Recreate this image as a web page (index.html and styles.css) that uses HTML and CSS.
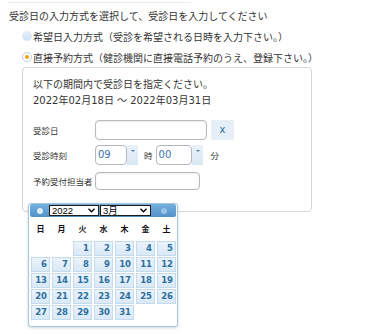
FILE: index.html
```html
<!DOCTYPE html>
<html lang="ja">
<head>
    <meta charset="UTF-8">
    <meta name="viewport" content="width=device-width, initial-scale=1.0">
    <title>受診日入力</title>
    <link rel="stylesheet" href="styles.css">
</head>
<body>
    <div class="page">
        <div class="topline"></div>
        <p class="title">受診日の入力方式を選択して、受診日を入力してください</p>

        <!-- Input method -->
        <div class="choices">
            <label class="choice"><span class="radio"></span>希望日入力方式（受診を希望される日時を入力下さい。）</label>
            <label class="choice"><span class="radio checked"></span>直接予約方式（健診機関に直接電話予約のうえ、登録下さい。）</label>
        </div>

        <!-- Direct booking panel -->
        <div class="panel">
            <p class="notice">以下の期間内で受診日を指定ください。<br>2022年02月18日 ～ 2022年03月31日</p>

            <div class="row">
                <span class="label">受診日</span>
                <span class="field date"></span>
                <span class="clear">x</span>
            </div>
            <div class="row">
                <span class="label">受診時刻</span>
                <span class="combo hour"><span class="val">09</span><span class="arrow"></span></span>
                <span class="unit">時</span>
                <span class="combo minute"><span class="val">00</span><span class="arrow"></span></span>
                <span class="unit last">分</span>
            </div>
            <div class="row short">
                <span class="label">予約受付担当者</span>
                <span class="field staff"></span>
            </div>
        </div>

        <!-- Datepicker popup -->
        <div class="calendar">
            <div class="cal-head">
                <span class="nav"></span>
                <span class="pick year">2022<svg width="7" height="5" viewBox="0 0 7 5"><path d="M0.5 0.8 L3.5 3.8 L6.5 0.8" fill="none" stroke="#000" stroke-width="1.3"/></svg></span>
                <span class="pick month">3月<svg width="7" height="5" viewBox="0 0 7 5"><path d="M0.5 0.8 L3.5 3.8 L6.5 0.8" fill="none" stroke="#000" stroke-width="1.3"/></svg></span>
                <span class="nav off"></span>
            </div>
            <div class="week">
                <span>日</span><span>月</span><span>火</span><span>水</span><span>木</span><span>金</span><span>土</span>
            </div>
            <div class="days">
                <span class="blank"></span><span class="blank"></span>
                <span>1</span><span>2</span><span>3</span><span>4</span><span>5</span>
                <span>6</span><span>7</span><span>8</span><span>9</span><span>10</span><span>11</span><span>12</span>
                <span>13</span><span>14</span><span>15</span><span>16</span><span>17</span><span>18</span><span>19</span>
                <span>20</span><span>21</span><span>22</span><span>23</span><span>24</span><span>25</span><span>26</span>
                <span>27</span><span>28</span><span>29</span><span>30</span><span>31</span>
            </div>
        </div>
    </div>
</body>
</html>
```

FILE: styles.css
```css
/* Theme Colors */
:root {
    --text: #333;
    --blue-text: #2e6e9e;
    --cell-border: #c5dbec;
    --frame: #a6c9e2;
}

* {
    box-sizing: border-box;
}

body {
    margin: 0;
    background: #fff;
    color: var(--text);
    font-family: "DejaVu Sans", "Noto Sans CJK JP", sans-serif;
    font-size: 10px;
}

.page {
    position: relative;
    padding: 2px 0 0 9px;
    height: 336px;
}

.topline {
    width: 184px;
    height: 1px;
    margin-left: -2px;
    background: #ececec;
}

.title {
    margin: 6px 0 0;
    line-height: 14px;
    font-family: "Noto Sans CJK JP", sans-serif;
}

/* Radios */
.choices {
    margin: 3px 0 0 13px;
    display: flex;
    flex-direction: column;
    gap: 1px;
}

.choice {
    display: flex;
    align-items: center;
    height: 20px;
    font-family: "Noto Sans CJK JP", sans-serif;
}

.radio {
    width: 10px;
    height: 10px;
    border-radius: 50%;
    margin-right: 1px;
    background: linear-gradient(#e6f0fa, #cfe1f3);
    position: relative;
}

.radio.checked {
    background: #fff;
    border: 1px solid #b9cfe4;
}

.radio.checked::after {
    content: "";
    position: absolute;
    left: 2px;
    top: 2px;
    width: 4px;
    height: 4px;
    border-radius: 50%;
    background: #f0a000;
}

/* Panel */
.panel {
    margin-left: 13px;
    width: 290px;
    border: 1px solid #d6d6d6;
    border-radius: 4px;
    padding: 9px 0 21px 10px;
}

.notice {
    margin: 0 0 11px;
    line-height: 16px;
}

.row {
    display: flex;
    align-items: center;
    height: 20px;
    margin-bottom: 5px;
}

.row.short {
    height: 18px;
    margin: 7px 0 0;
}

.label {
    width: 62px;
    font-size: 8.5px;
    font-family: "Noto Sans CJK JP", sans-serif;
    white-space: nowrap;
}

.field {
    height: 20px;
    border: 1px solid #b9b9b9;
    border-radius: 4px;
    box-shadow: inset 0 1px 2px rgba(0, 0, 0, 0.08);
}

.field.date {
    width: 112px;
}

.field.staff {
    width: 105px;
    height: 18px;
}

.clear {
    margin-left: 4px;
    width: 23px;
    height: 20px;
    background: #e6eff8;
    border-radius: 2px;
    color: var(--blue-text);
    text-align: center;
    line-height: 19px;
}

.combo {
    display: flex;
    height: 20px;
}

.combo.hour {
    width: 43px;
}

.combo.minute {
    width: 47px;
}

.combo .val {
    flex: 1;
    border: 1px solid #b2b8c0;
    border-radius: 4px;
    padding-left: 2px;
    line-height: 18px;
    color: #3b73ad;
}

.combo .arrow {
    width: 11px;
    background: linear-gradient(#e9f1f9, #d9e7f4);
    position: relative;
}

.combo .arrow::after {
    content: "";
    position: absolute;
    left: 4px;
    top: 5px;
    border-left: 2px solid transparent;
    border-right: 2px solid transparent;
    border-top: 2px solid #4c7fb5;
}

.unit {
    margin: 0 3px 0 6px;
    font-size: 8.5px;
    font-family: "Noto Sans CJK JP", sans-serif;
}

.unit.last {
    margin-left: 8px;
}

/* Datepicker */
.calendar {
    position: absolute;
    left: 28px;
    top: 203px;
    width: 150px;
    height: 124px;
    background: #fff;
    border: 1px solid var(--frame);
    border-radius: 3px;
    box-shadow: 0 1px 3px rgba(0, 0, 0, 0.18);
    padding: 0 2px;
}

.cal-head {
    height: 13px;
    margin: 0 -1px;
    background: linear-gradient(#75aedd, #5293cb);
    border-radius: 2px;
    display: flex;
    align-items: center;
}

.nav {
    width: 6px;
    height: 6px;
    margin: 0 6px 0 7px;
    border-radius: 50%;
    background: #dcebf8;
}

.nav.off {
    margin: 0 0 0 10px;
    background: #9cc2e4;
}

.pick {
    height: 11px;
    background: #fff;
    border: 1px solid #1d1d1d;
    color: #000;
    font-family: "Liberation Sans", "Noto Sans CJK JP", sans-serif;
    font-size: 9.5px;
    line-height: 9px;
    padding-left: 2px;
    display: flex;
    align-items: center;
    justify-content: space-between;
}

.pick svg {
    margin-right: 3px;
}

.pick.year {
    width: 50px;
}

.pick.month {
    width: 51px;
    margin-left: 1px;
}

.week {
    display: grid;
    grid-template-columns: repeat(7, 19px);
    column-gap: 2px;
    height: 24px;
    line-height: 24px;
    text-align: center;
    color: #111;
    font-family: "Noto Sans CJK JP", sans-serif;
    font-weight: bold;
    font-size: 8px;
}

.days {
    display: grid;
    grid-template-columns: repeat(7, 19px);
    grid-auto-rows: 15px;
    gap: 1px 2px;
}

.days span {
    background: linear-gradient(#eaf3fc, #d9e9f7);
    border: 1px solid var(--cell-border);
    color: var(--blue-text);
    font-weight: bold;
    font-size: 8.5px;
    line-height: 13px;
    text-align: right;
    padding-right: 2px;
}

.days span.blank {
    background: none;
    border: none;
}
```
